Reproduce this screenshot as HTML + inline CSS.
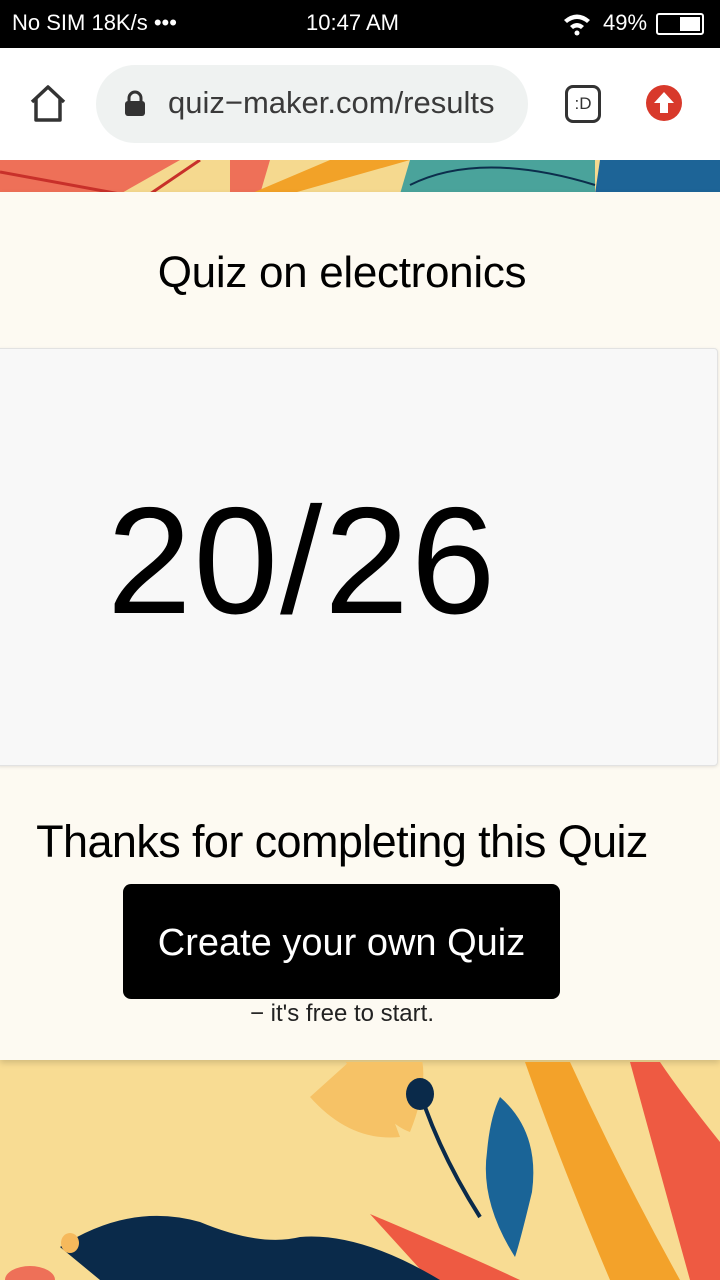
<!DOCTYPE html>
<html><head><meta charset="utf-8"><style>
*{margin:0;padding:0;box-sizing:border-box}
body{width:720px;height:1280px;overflow:hidden;position:relative;font-family:"Liberation Sans",sans-serif;background:#f8dc93}
.sb{position:absolute;top:0;left:0;width:720px;height:48px;background:#000;color:#fff;font-size:22px}
.nav{position:absolute;top:48px;left:0;width:720px;height:112px;background:#fff}
.url{position:absolute;left:96px;top:17px;width:432px;height:78px;border-radius:39px;background:#eff2f1}
.panel{position:absolute;top:192px;left:0;width:720px;height:868px;background:#fdfaf2;box-shadow:0 3px 6px rgba(0,0,0,.15)}
.card{position:absolute;top:348px;left:-4px;width:722px;height:418px;background:#f8f8f8;border:1px solid #e2e2e2;border-radius:4px;box-shadow:0 1px 3px rgba(0,0,0,.1)}
</style></head><body>
<svg style="position:absolute;top:160px;left:0" width="720" height="34"><rect width="720" height="34" fill="#f5d98f"/><path d="M0 0h180l-60 34H0z" fill="#ee7058"/><path d="M0 12 L120 34 M200 0 L150 34" stroke="#c8302a" stroke-width="3"/><path d="M230 0h40l-10 34h-30z" fill="#ee7058"/><path d="M330 0h80l-120 34h-40z" fill="#f2a228"/><path d="M410 0h185v34H400z" fill="#4aa39b"/><path d="M600 0h120v34H595z" fill="#1d6497"/><path d="M410 25 Q480 -10 595 25" stroke="#0c2e4c" fill="none" stroke-width="2"/></svg>
<div class="sb"><span style="position:absolute;left:12px;top:10px">No SIM 18K/s •••</span><span style="position:absolute;left:306px;top:10px">10:47 AM</span><span style="position:absolute;left:603px;top:10px">49%</span>
<svg style="position:absolute;left:562px;top:12px" width="36" height="24"><path d="M2 8 Q15 -3 28 8 L25 11 Q15 3 5 11z M8 14 Q15 8 22 14 L19 17 Q15 14 11 17z" fill="#fff"/><circle cx="15" cy="21" r="2.5" fill="#fff"/></svg>
<div style="position:absolute;left:656px;top:13px;width:48px;height:22px;border:2px solid #fff;border-radius:3px"><div style="position:absolute;right:2px;top:2px;width:20px;height:14px;background:#fff"></div></div></div>
<div class="nav">
<svg style="position:absolute;left:28px;top:36px" width="40" height="40"><path d="M4 18 L20 3 L36 18 M8 15 V36 H32 V15" stroke="#333" stroke-width="3.5" fill="none" stroke-linejoin="round"/></svg>
<div class="url"><svg style="position:absolute;left:28px;top:25px" width="22" height="28"><path d="M5 12V8a6 6 0 0112 0v4" stroke="#333" stroke-width="3" fill="none"/><rect x="1" y="11" width="20" height="15" rx="3" fill="#333"/></svg><span style="position:absolute;left:72px;top:20px;font-size:31px;color:#3a3a3a;white-space:nowrap">quiz−maker.com/results</span></div>
<div style="position:absolute;left:565px;top:37px;width:36px;height:38px;border:3.5px solid #333;border-radius:8px;font-size:17px;line-height:31px;text-align:center;color:#333">:D</div>
<svg style="position:absolute;left:645px;top:36px" width="38" height="38"><circle cx="19" cy="19" r="18" fill="#d8392b"/><path d="M19 8 L29 19 H23 V29 H15 V19 H9z" fill="#fff"/></svg>
</div>
<div class="panel"></div>
<div style="position:absolute;top:248px;left:0;width:684px;text-align:center;font-size:44px;letter-spacing:-0.3px;color:#000">Quiz on electronics</div>
<div class="card"><div style="position:absolute;left:110px;top:132px;font-size:152px;line-height:160px;letter-spacing:2px;color:#000">20/26</div></div>
<div style="position:absolute;top:816px;left:0;width:684px;text-align:center;font-size:45px;letter-spacing:-0.6px">Thanks for completing this Quiz</div>
<div style="position:absolute;top:884px;left:123px;width:437px;height:115px;background:#000;border-radius:8px;color:#fff;font-size:38px;line-height:118px;text-align:center">Create your own Quiz</div>
<div style="position:absolute;top:1000px;left:0;width:684px;text-align:center;font-size:24px;color:#222">− it's free to start.</div>
<svg style="position:absolute;top:1062px;left:0" width="720" height="218">
<path d="M310 35 Q350 80 400 75 Q380 20 360 -10 Z M340 -10 Q380 60 410 70 Q430 20 420 -10Z" fill="#f6c266"/>
<ellipse cx="420" cy="32" rx="14" ry="16" fill="#0a2a4a"/><path d="M425 45 Q445 100 480 155" stroke="#0a2a4a" stroke-width="4" fill="none"/>
<path d="M500 35 Q540 70 532 130 Q520 180 515 195 Q480 140 487 90 Q490 55 500 35Z" fill="#1a6497"/>
<path d="M525 0 Q560 100 610 218 H680 Q620 110 570 0Z" fill="#f3a22a"/>
<path d="M630 0 Q660 110 690 218 H720 V80 Q680 30 660 0Z" fill="#ee5a42"/>
<path d="M370 152 Q460 190 520 218 H430Z" fill="#ee5a42"/>
<path d="M60 185 Q130 140 200 160 Q260 185 300 175 Q360 170 440 218 H100Z" fill="#0a2a4a"/>
<ellipse cx="70" cy="181" rx="9" ry="10" fill="#f6b95c"/>
<ellipse cx="30" cy="218" rx="25" ry="14" fill="#ee7058"/>
</svg>
</body></html>
